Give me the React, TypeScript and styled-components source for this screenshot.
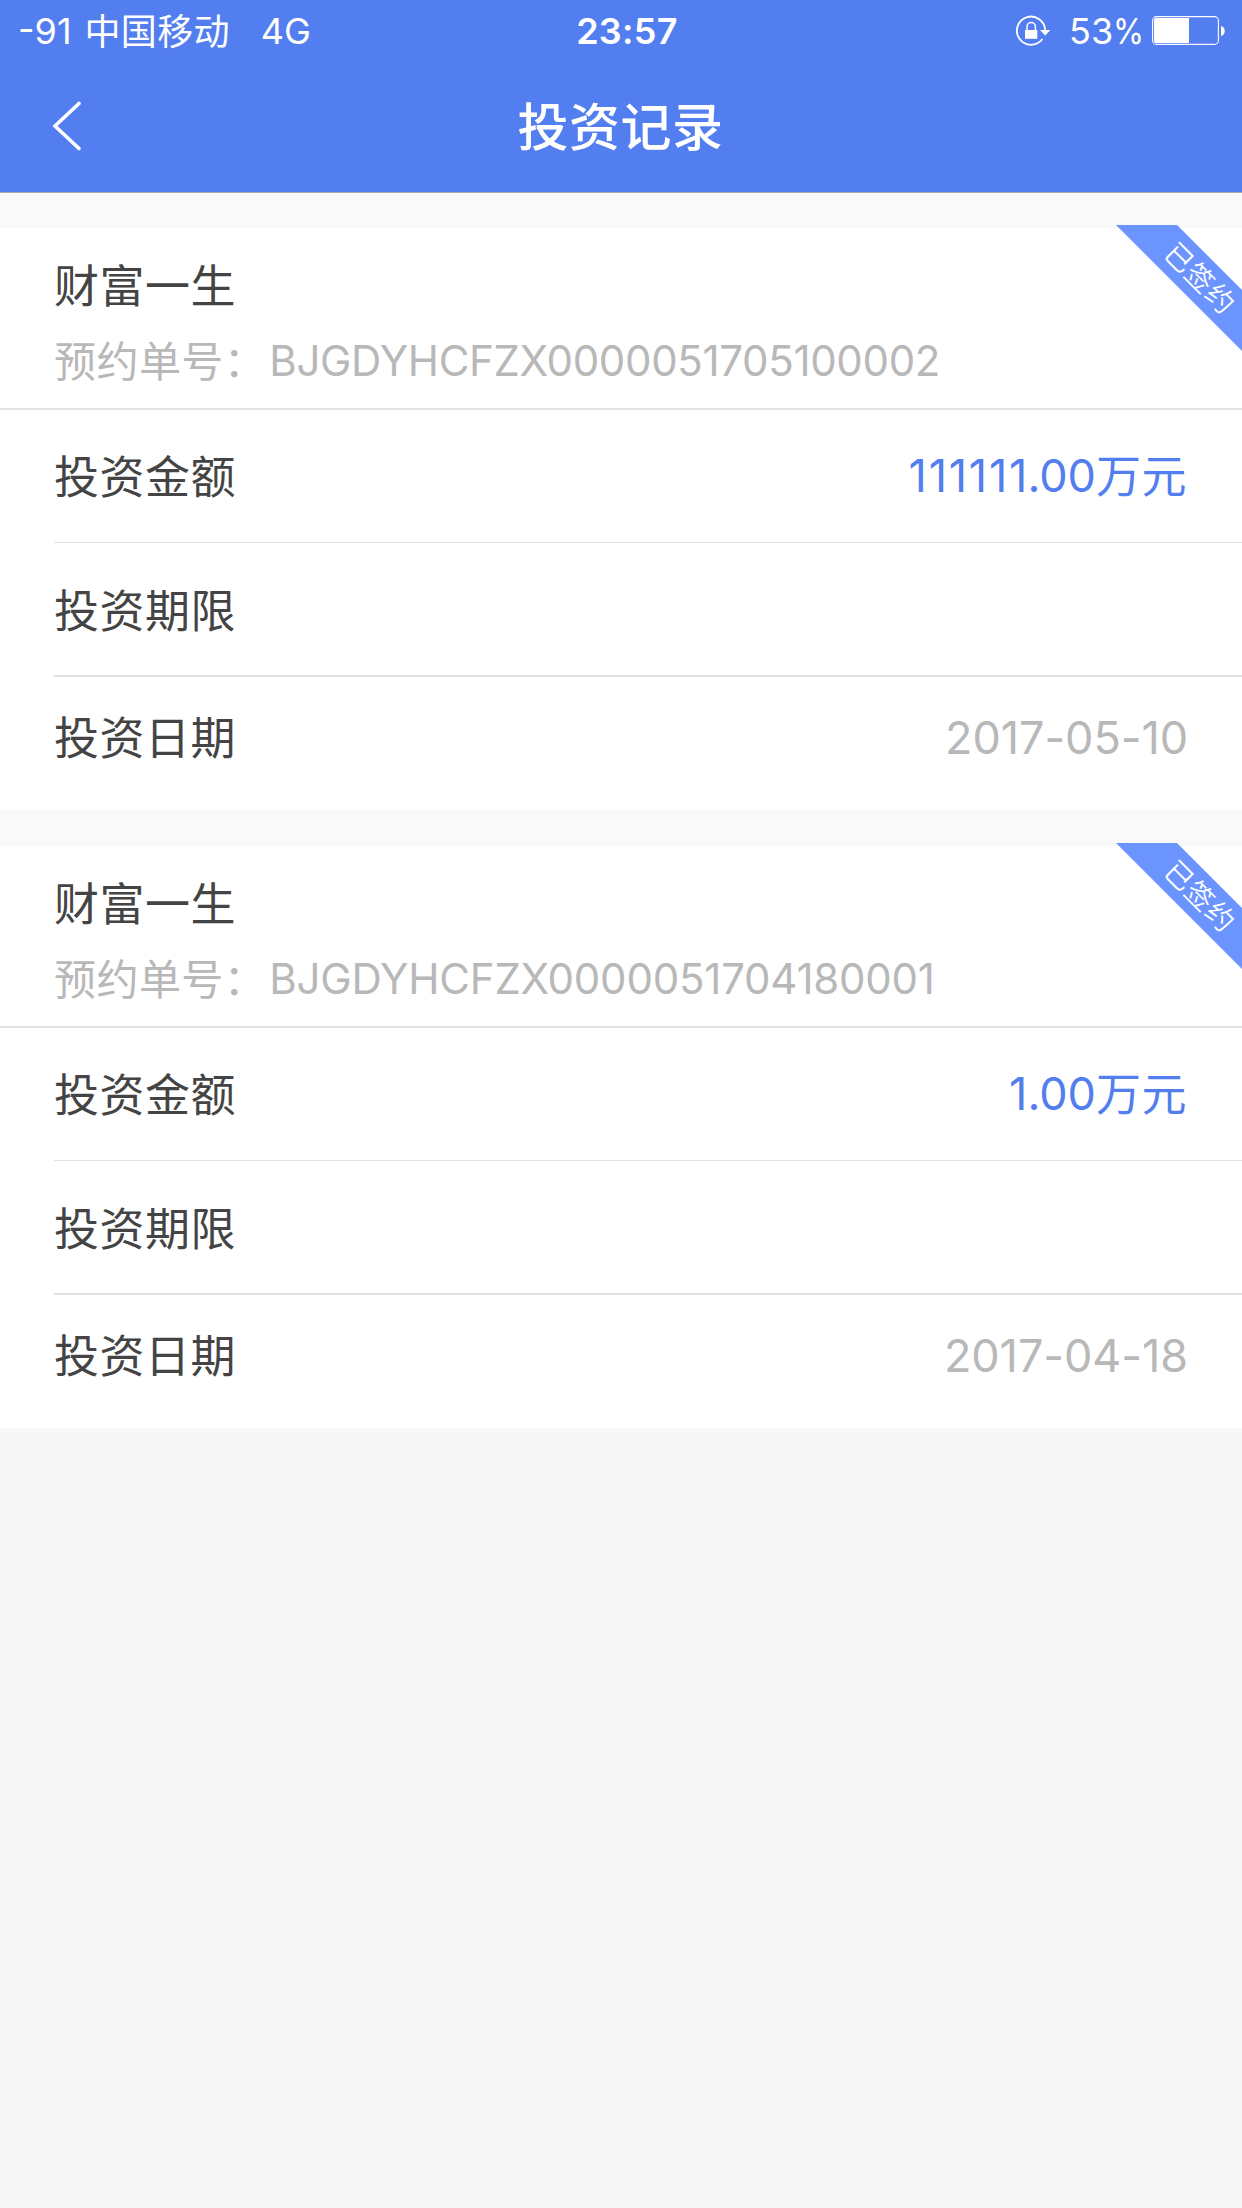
import React from "react";
import styled, { createGlobalStyle } from "styled-components";

const Global = createGlobalStyle`
  * { box-sizing: border-box; }
  html, body { margin: 0; background: #f7f7f7; }
  body { font-family: Inter, "Noto Sans CJK SC", sans-serif; }
`;

const Screen = styled.div`
  width: 1242px;
  min-height: 2208px;
  background: #f7f7f7;
`;

const Header = styled.header`
  height: 193px;
  background: #537eef;
  border-bottom: 1px solid #a9aab0;
  color: #fff;
`;

const StatusBar = styled.div`
  display: grid;
  grid-template-columns: 1fr auto 1fr;
  align-items: center;
  height: 62px;
  padding: 0 16px 0 18px;
  font-size: 36px;
  line-height: 44px;
`;

const Carrier = styled.div`
  display: flex;
  gap: 13px;
`;

const CarrierName = styled.span`
  letter-spacing: 0.3px;
  margin: 1px 18px -1px 0;
`;

const Clock = styled.time`
  padding-left: 10px;
  font-weight: 600;
  letter-spacing: 0.3px;
`;

const StatusRight = styled.div`
  display: flex;
  align-items: center;
  justify-content: flex-end;
`;

const BatteryLevel = styled.span`
  display: flex;
  width: 75px;
  margin: 0 8px 0 17px;
`;

const Percent = styled.span`
  transform: scaleX(0.88);
  transform-origin: left;
`;

const Icon = styled.svg`
  display: block;
  flex: none;
`;

const NavBar = styled.nav`
  display: grid;
  grid-template-columns: 1fr auto 1fr;
  align-items: center;
  height: 130px;
  padding: 0 51px;
`;

const BackButton = styled.button`
  justify-self: start;
  margin-bottom: 3px;
  padding: 0;
  border: 0;
  background: none;
  color: inherit;
`;

const Title = styled.h1`
  margin: 1px 1px 0 0;
  font-size: 51px;
  line-height: 60px;
  font-weight: 500;
  letter-spacing: 0.5px;
`;

const Records = styled.main`
  display: flex;
  flex-direction: column;
  gap: 36px;
  padding-top: 35px;
  background: #f9f9f9;
`;

const Card = styled.section`
  position: relative;
  height: 582px;
  background: #fff;
  color: #444;
  font-size: 45px;
  line-height: 54px;
`;

const CardHead = styled.div`
  height: 182px;
  padding: 32px 54px 0;
  border-bottom: 2px solid #e1e1e1;
`;

const Name = styled.h2`
  margin: 0 0 22px;
  font-size: inherit;
  font-weight: 400;
  letter-spacing: 0.5px;
`;

const Order = styled.div`
  display: flex;
  gap: 3px;
  color: #b8b8b8;
  font-size: 42px;
  line-height: 50px;
`;

const OrderLabel = styled.span`
  margin: 1px 0 -1px;
  letter-spacing: 0.45px;
`;

const OrderNumber = styled.span<{ $tracking: number }>`
  letter-spacing: ${(p) => p.$tracking}px;
`;

const Row = styled.div<{ $line: number; $height: number; $lift?: number }>`
  display: flex;
  align-items: center;
  justify-content: space-between;
  height: ${(p) => p.$height}px;
  margin-left: 54px;
  padding: 0 55px ${(p) => p.$lift ?? 0}px 0;
  border-bottom: ${(p) => p.$line}px solid #e1e1e1;
`;

const Label = styled.span<{ $drop?: number }>`
  padding-top: ${(p) => p.$drop ?? 3}px;
  letter-spacing: 0.5px;
`;

const Amount = styled.span`
  display: flex;
  color: #537eef;
`;

const Whole = styled.span`
  margin-right: -1.8px;
  letter-spacing: 1.8px;
`;

const Unit = styled.span`
  margin: 1px 0 -1px;
  letter-spacing: 0.5px;
`;

const DateText = styled.time`
  margin-right: -1px;
  color: #b8b8b8;
  letter-spacing: -0.05px;
`;

const Ribbon = styled.div`
  position: absolute;
  top: -3px;
  right: 0;
  display: flex;
  align-items: center;
  justify-content: center;
  width: 126px;
  height: 126px;
  background: #6b94ff;
  clip-path: polygon(0 0, 61px 0, 126px 65px, 126px 126px);
`;

const RibbonText = styled.span`
  flex: none;
  color: #fff;
  font-family: "Noto Sans CJK SC", sans-serif;
  font-weight: 350;
  font-size: 28px;
  line-height: 26px;
  letter-spacing: 0.8px;
  transform: translate(22px, -11px) rotate(45deg);
`;

const RotationLock = () => (
  <Icon width="36" height="32" viewBox="1016 14 36 32" fill="none">
    <path d="M1045.1 29.5A14.1 14.1 0 1 0 1042.4 38" stroke="#fff" strokeWidth="1.8" />
    <path d="M1040 29h10.4l-5.2 5.4z" fill="#fff" />
    <path d="M1025 29h12.3v8.8H1025z" fill="#fff" />
    <path d="M1027 29.5v-3.7a4.2 4.2 0 0 1 8.4 0v3.7" stroke="#fff" strokeWidth="1.5" />
  </Icon>
);

const Battery = () => (
  <Icon width="74" height="32" viewBox="0 0 74 32" fill="none">
    <rect x="0.6" y="1.6" width="65.8" height="27.8" rx="4" stroke="#fff" strokeWidth="1.1" />
    <path d="M4 3h33v25H4a2 2 0 0 1-2-2V5a2 2 0 0 1 2-2z" fill="#fff" />
    <path d="M69 11c5 1 5 9 0 10z" fill="#fff" />
  </Icon>
);

const Chevron = () => (
  <Icon width="32" height="50" viewBox="0 0 32 50" fill="none">
    <path d="M28 2.5L4 25l24 22.5" stroke="#fff" strokeWidth="3.6" strokeLinecap="round" />
  </Icon>
);

const records = [
  { name: "财富一生", order: "BJGDYHCFZX0000051705100002", tracking: -0.33, whole: "111111", cents: ".00", date: "2017-05-10" },
  { name: "财富一生", order: "BJGDYHCFZX0000051704180001", tracking: -0.22, whole: "1", cents: ".00", date: "2017-04-18" },
];

export default function App() {
  return (
    <Screen>
      <Global />
      <Header>
        <StatusBar>
          <Carrier>
            <span>-91</span>
            <CarrierName>中国移动</CarrierName>
            <span>4G</span>
          </Carrier>
          <Clock>23:57</Clock>
          <StatusRight>
            <RotationLock />
            <BatteryLevel>
              53<Percent>%</Percent>
            </BatteryLevel>
            <Battery />
          </StatusRight>
        </StatusBar>
        <NavBar>
          <BackButton aria-label="返回">
            <Chevron />
          </BackButton>
          <Title>投资记录</Title>
        </NavBar>
      </Header>
      <Records>
        {records.map((r) => (
          <Card key={r.order}>
            <CardHead>
              <Name>{r.name}</Name>
              <Order>
                <OrderLabel>预约单号：</OrderLabel>
                <OrderNumber $tracking={r.tracking}>{r.order}</OrderNumber>
              </Order>
            </CardHead>
            <Row $line={1} $height={133}>
              <Label>投资金额</Label>
              <Amount>
                <Whole>{r.whole}</Whole>
                {r.cents}
                <Unit>万元</Unit>
              </Amount>
            </Row>
            <Row $line={2} $height={134}>
              <Label $drop={5}>投资期限</Label>
            </Row>
            <Row $line={0} $height={133} $lift={12}>
              <Label>投资日期</Label>
              <DateText>{r.date}</DateText>
            </Row>
            <Ribbon>
              <RibbonText>已签约</RibbonText>
            </Ribbon>
          </Card>
        ))}
      </Records>
    </Screen>
  );
}
